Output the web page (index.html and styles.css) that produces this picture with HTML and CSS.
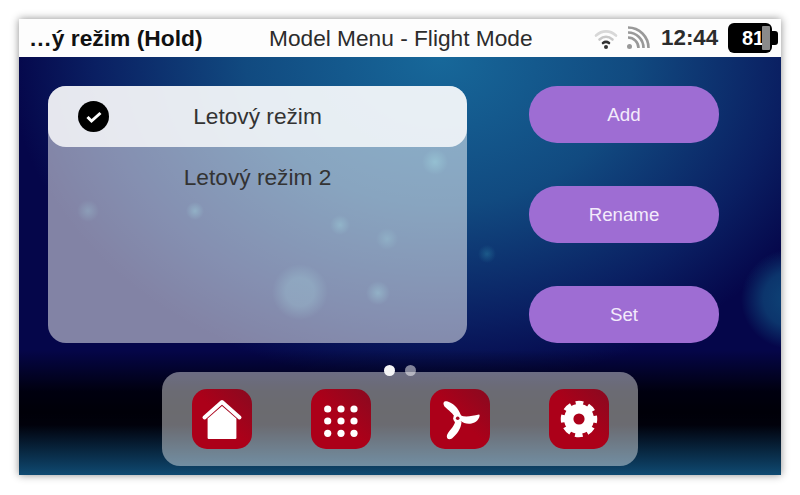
FILE: index.html
```html
<!DOCTYPE html>
<html lang="en">

<head>
    <meta charset="UTF-8">
    <title>Model Menu - Flight Mode</title>
    <link rel="stylesheet" href="styles.css">
</head>

<body>
    <div class="screen">
        <!-- Top status bar -->
        <header class="topbar">
            <span class="mode">…ý režim (Hold)</span>
            <span class="title">Model Menu - Flight Mode</span>
            <div class="status">
                <svg class="wifi" width="24" height="24" viewBox="0 0 24 24">
                    <path d="M2 9.500C8 4 16 4 22 9.500" fill="none" stroke="#d8d8d8" stroke-width="2.600" stroke-linecap="round"/>
                    <path d="M5.500 13.500C9.500 10 14.500 10 18.500 13.500" fill="none" stroke="#c8c8c8" stroke-width="2.600" stroke-linecap="round"/>
                    <path d="M9 17C10.800 15.600 13.200 15.600 15 17" fill="none" stroke="#333" stroke-width="2.600" stroke-linecap="round"/>
                    <circle cx="12" cy="21" r="2" fill="#333"/>
                </svg>
                <svg class="signal" width="24" height="24" viewBox="0 0 24 24">
                    <circle cx="3.500" cy="20.500" r="2.500" fill="#999"/>
                    <path d="M2 11.500A10.500 10.500 0 0 1 12.500 22" fill="none" stroke="#999" stroke-width="2.600"/>
                    <path d="M2 6.500A15.500 15.500 0 0 1 17.500 22" fill="none" stroke="#999" stroke-width="2.600"/>
                    <path d="M2 1.500A20.500 20.500 0 0 1 22.500 22" fill="none" stroke="#999" stroke-width="2.600"/>
                </svg>
                <span class="clock">12:44</span>
                <div class="battery">
                    <div class="battery-body">
                        <span>81</span>
                        <i class="battery-level"></i>
                    </div>
                    <i class="battery-nub"></i>
                </div>
            </div>
        </header>

        <main class="content">
            <div class="columns">
                <div class="list">
                    <div class="row selected">
                        <span class="check">
                            <svg width="16" height="14" viewBox="0 0 16 14">
                                <path d="M1.500 7L5.500 11L14.500 3" fill="none" stroke="#fff" stroke-width="3"/>
                            </svg>
                        </span>
                        Letový režim
                    </div>
                    <div class="row">Letový režim 2</div>
                </div>
                <div class="actions">
                    <button>Add</button>
                    <button>Rename</button>
                    <button>Set</button>
                </div>
            </div>

            <div class="dock">
                <div class="pager">
                    <span class="dot active"></span>
                    <span class="dot"></span>
                </div>
                <a class="tile">
                    <svg width="60" height="60" viewBox="0 0 60 60">
                        <path d="M12.500 28.500L30 13L47.500 28.500" fill="none" stroke="#fff" stroke-width="4" stroke-linecap="round" stroke-linejoin="round"/>
                        <path d="M15.600 29.500L30 17L44.400 29.500V49a1 1 0 0 1-1 1H16.600a1 1 0 0 1-1-1Z" fill="#fff"/>
                    </svg>
                </a>
                <a class="tile">
                    <svg width="60" height="60" viewBox="0 0 60 60" fill="#fff">
                        <circle cx="16.700" cy="20" r="3.600"/><circle cx="30" cy="20" r="3.600"/><circle cx="43" cy="20" r="3.600"/>
                        <circle cx="16.700" cy="32" r="3.600"/><circle cx="30" cy="32" r="3.600"/><circle cx="43" cy="32" r="3.600"/>
                        <circle cx="16.700" cy="44.300" r="3.600"/><circle cx="30" cy="44.300" r="3.600"/><circle cx="43" cy="44.300" r="3.600"/>
                    </svg>
                </a>
                <a class="tile">
                    <svg width="60" height="60" viewBox="0 0 60 60" fill="#fff">
                        <path d="M26 30C23 24 19 22 14.500 17.500C12.500 14 13.500 12 17 12.300C22 13.500 29 19 31 27Z"/>
                        <path d="M30.500 26.500C36 28.500 42 27 49 25.500C50.500 25.500 49.500 31 44.500 33.500C39 36 34 34.500 30.500 32Z"/>
                        <path d="M25 31C26 36 20 40 17 46C16 50 19 51 22 49.500C27 45 31 40 31.500 33Z"/>
                        <circle cx="27.700" cy="29.300" r="4.500"/>
                        <circle cx="27.700" cy="29.300" r="1.800" fill="#a60a22"/>
                    </svg>
                </a>
                <a class="tile">
                    <svg width="60" height="60" viewBox="0 0 60 60" fill="none" stroke="#fff">
                        <!-- ring plus a dashed ring for the teeth -->
                        <circle cx="30" cy="30" r="10.300" stroke-width="9.400"/>
                        <circle cx="30" cy="30" r="16" stroke-width="4.500" stroke-dasharray="7.600 4.966" stroke-dashoffset="3.800"/>
                    </svg>
                </a>
            </div>
        </main>
    </div>
</body>

</html>
```

FILE: styles.css
```css
* {
    box-sizing: border-box;
}

body {
    margin: 0;
    height: 495px;
    padding: 19px 19px 20px;
    background-color: #ffffff;
    font-family: "Liberation Sans", Arial, sans-serif;
    overflow: hidden;
}

.screen {
    display: flex;
    flex-direction: column;
    height: 456px;
    box-shadow: 0 0 8px rgba(0, 0, 0, 0.45);
}

/* Top status bar */
.topbar {
    display: flex;
    align-items: center;
    height: 38px;
    padding-left: 10px;
    background-color: #fdfdfd;
    color: #222222;
}

.mode {
    width: 240px;
    font-size: 22.8px;
    font-weight: bold;
    color: #111111;
    white-space: nowrap;
}

.title {
    width: 325px;
    font-size: 22.7px;
    color: #2c2c2c;
    white-space: nowrap;
}

.status {
    display: flex;
    align-items: center;
}

.wifi {
    margin-right: 8px;
}

.signal {
    margin-right: 11px;
}

.clock {
    width: 67px;
    font-size: 22.4px;
    font-weight: bold;
    color: #2c2c2c;
}

.battery {
    display: flex;
    align-items: center;
}

.battery-body {
    display: flex;
    align-items: center;
    justify-content: space-between;
    width: 44px;
    height: 30px;
    padding: 0 2px 0 14px;
    border-radius: 6px;
    background-color: #000000;
    color: #ffffff;
    font-size: 20px;
    font-weight: bold;
}

.battery-body span {
    width: 20px;
    white-space: nowrap;
}

.battery-level {
    width: 8px;
    height: 24px;
    margin-left: -3px;
    border-radius: 1px;
    background-color: #8a8a8a;
}

.battery-nub {
    width: 6px;
    height: 14px;
    border-radius: 0 3px 3px 0;
    background-color: #000000;
}

/* Wallpaper with the blurred light spots */
.content {
    flex: 1;
    display: flex;
    flex-direction: column;
    padding: 29px 62px 9px 29px;
    background:
        radial-gradient(circle 50px at 772px 242px, rgba(20, 110, 150, 0.6) 0, rgba(20, 110, 150, 0.45) 55%, rgba(20, 110, 150, 0) 100%),
        radial-gradient(circle 28px at 281px 235px, rgba(100, 220, 220, 0.22) 50%, rgba(100, 220, 220, 0) 100%),
        radial-gradient(circle 12px at 359px 236px, rgba(90, 220, 220, 0.32) 0, rgba(90, 220, 220, 0) 100%),
        radial-gradient(circle 13px at 416px 105px, rgba(90, 220, 220, 0.32) 0, rgba(90, 220, 220, 0) 100%),
        radial-gradient(circle 11px at 368px 182px, rgba(90, 220, 220, 0.22) 0, rgba(90, 220, 220, 0) 100%),
        radial-gradient(circle 10px at 321px 168px, rgba(90, 220, 220, 0.28) 0, rgba(90, 220, 220, 0) 100%),
        radial-gradient(circle 9px at 176px 154px, rgba(90, 220, 220, 0.32) 0, rgba(90, 220, 220, 0) 100%),
        radial-gradient(circle 11px at 69px 154px, rgba(90, 220, 220, 0.22) 0, rgba(90, 220, 220, 0) 100%),
        radial-gradient(circle 9px at 468px 197px, rgba(60, 170, 190, 0.3) 0, rgba(60, 170, 190, 0) 100%),
        linear-gradient(to bottom, rgba(0, 0, 0, 0) 70%, #00000f 80%, #000008 85%, rgba(0, 0, 0, 0.85) 88%, #0f4a72 100%),
        radial-gradient(ellipse 430px 330px at 420px 0px, #17689a 0, #114a80 45%, #0a1f62 80%, #05064a 100%);
    background-color: #05064a;
}

.columns {
    display: flex;
    justify-content: space-between;
    height: 257px;
}

.list {
    width: 419px;
    border-radius: 18px;
    background-color: rgba(255, 255, 255, 0.5);
    color: #333333;
    font-size: 22.7px;
}

.row {
    position: relative;
    height: 61px;
    display: flex;
    align-items: center;
    justify-content: center;
    padding-bottom: 1px;
}

.row.selected {
    border-radius: 18px;
    background-color: rgba(255, 255, 255, 0.8);
}

.check {
    position: absolute;
    left: 30px;
    top: 15px;
    width: 31px;
    height: 31px;
    display: flex;
    align-items: center;
    justify-content: center;
    border-radius: 50%;
    background-color: #000000;
}

.actions {
    display: flex;
    flex-direction: column;
    justify-content: space-between;
    width: 190px;
}

.actions button {
    height: 57px;
    padding: 1px 0 0;
    border: none;
    border-radius: 28px;
    background-color: #9e6dd3;
    color: #f3ebfb;
    font-family: inherit;
    font-size: 18.7px;
}

/* Bottom dock */
.dock {
    position: relative;
    display: flex;
    justify-content: space-between;
    align-self: center;
    width: 476px;
    height: 94px;
    margin: 29px 0 0 33px;
    padding: 17px 29px 0 30px;
    border-radius: 18px;
    background-color: rgba(255, 255, 255, 0.42);
}

.pager {
    position: absolute;
    left: 222px;
    top: -7px;
    display: flex;
    gap: 10px;
}

.dot {
    width: 11px;
    height: 11px;
    border-radius: 50%;
    background-color: rgba(255, 255, 255, 0.5);
}

.dot.active {
    background-color: #f4f4f6;
}

.tile {
    width: 60px;
    height: 60px;
    border-radius: 15px;
    background: linear-gradient(to top right, #ac0019, #ac0019 50%, #880a20);
}

.tile svg {
    display: block;
}
```
